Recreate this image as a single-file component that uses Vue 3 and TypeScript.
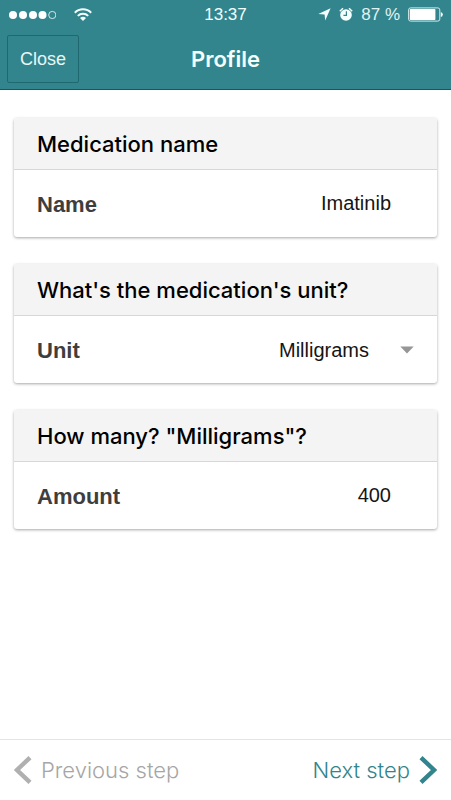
<script setup lang="ts">
import { computed, ref } from 'vue'

const name = ref('Imatinib')
const unit = ref('Milligrams')
const amount = ref('400')
const units: string[] = ['Milligrams']
const amountHeading = computed(() => `How many? "${unit.value}"?`)
</script>

<template>
  <div class="screen">
    <header class="top">
      <div class="status">
        <div class="side">
          <svg class="signal" width="48" height="10" viewBox="0 0 48 10" aria-hidden="true">
            <g fill="#fff">
              <circle cx="5" cy="5" r="4" />
              <circle cx="15" cy="5" r="4" />
              <circle cx="25" cy="5" r="4" />
              <circle cx="34.5" cy="5" r="4" />
            </g>
            <circle cx="44.3" cy="5" r="3.6" fill="none" stroke="#e4f1f1" stroke-width="0.9" />
          </svg>
          <svg width="18" height="13" viewBox="0 0 18 13" fill="none" stroke="#f4ffff" stroke-width="2" aria-hidden="true">
            <path d="M0.8 4.7a11.6 11.6 0 0 1 16.4 0" />
            <path d="M3.8 7.9a7.4 7.4 0 0 1 10.4 0" />
            <path d="M9 13L6 10.1a4.3 4.3 0 0 1 6 0z" fill="#f4ffff" stroke="none" />
          </svg>
        </div>
        <span class="time">13:37</span>
        <div class="side end">
          <svg width="13" height="13" viewBox="0 0 13 13" fill="#f4ffff" aria-hidden="true">
            <path d="M12.6 0.3L7.2 12.6L6.6 6.6L0.3 6.1z" />
          </svg>
          <svg class="alarm" width="14" height="15" viewBox="0 0 14 15" aria-hidden="true">
            <circle cx="7" cy="8" r="5.8" fill="#f4ffff" />
            <path d="M0.8 4.3L4 1.3M13.2 4.3L10 1.3" stroke="#f4ffff" stroke-width="1.5" />
            <path d="M7.4 4.3V8.4H4.4" fill="none" stroke="#32858c" stroke-width="1.2" />
          </svg>
          <span class="percent">87 %</span>
          <svg width="35" height="15" viewBox="0 0 35 15" aria-hidden="true">
            <rect x="0.6" y="0.9" width="31.2" height="13.2" rx="2" fill="none" stroke="#d5eaeb" stroke-width="1" />
            <rect x="1.8" y="2" width="25.6" height="11" rx="0.8" fill="#fff" />
            <path d="M32.8 5q2 0.5 2 2.5t-2 2.5z" fill="#f4ffff" />
          </svg>
        </div>
      </div>
      <div class="nav">
        <div class="nav-side"><button type="button" class="close">Close</button></div>
        <h1>Profile</h1>
        <div class="nav-side"></div>
      </div>
    </header>

    <main>
      <section class="card">
        <h2>Medication name</h2>
        <div class="row">
          <label for="name">Name</label>
          <input id="name" v-model="name" class="value" type="text" />
        </div>
      </section>
      <section class="card">
        <h2>What's the medication's unit?</h2>
        <div class="row with-caret">
          <label for="unit">Unit</label>
          <select id="unit" v-model="unit" class="value">
            <option v-for="u in units" :key="u" :value="u">{{ u }}</option>
          </select>
          <svg class="caret" width="14" height="8" viewBox="0 0 14 8" aria-hidden="true">
            <path d="M0.3 0.5H13.7L7 7.4z" fill="#969696" />
          </svg>
        </div>
      </section>
      <section class="card">
        <h2>{{ amountHeading }}</h2>
        <div class="row">
          <label for="amount">Amount</label>
          <input id="amount" v-model="amount" class="value" type="text" inputmode="decimal" />
        </div>
      </section>
    </main>

    <footer class="steps">
      <button type="button" class="step previous">
        <svg width="18" height="28" viewBox="0 0 18 28" aria-hidden="true">
          <path d="M16 1.6L3 14L16 26.4" fill="none" stroke="#b0b0b0" stroke-width="4.4" />
        </svg>
        <span>Previous step</span>
      </button>
      <button type="button" class="step next">
        <span>Next step</span>
        <svg width="18" height="28" viewBox="0 0 18 28" aria-hidden="true">
          <path d="M2 1.6L15 14L2 26.4" fill="none" stroke="currentColor" stroke-width="4.4" />
        </svg>
      </button>
    </footer>
  </div>
</template>

<style>
body {
  margin: 0;
  background: #fff;
}
</style>

<style scoped>
.screen {
  display: flex;
  flex-direction: column;
  min-height: 100vh;
  font-family: "Liberation Sans", Arial, sans-serif;
  color: #000;
}

.screen * {
  box-sizing: border-box;
}

button,
input,
select {
  margin: 0;
  border: 0;
  padding: 0;
  background: none;
  font-family: inherit;
  appearance: none;
}

.top {
  background: #32858c;
  border-bottom: 1px solid #145865;
  color: #f4ffff;
}

.status {
  display: flex;
  align-items: center;
  height: 29px;
  padding: 0 8px;
}

.side {
  display: flex;
  flex: 1;
  align-items: center;
  gap: 18px;
}

.side.end {
  justify-content: flex-end;
  gap: 8px;
}

.time,
.percent {
  font-size: 17px;
  line-height: 20px;
  white-space: nowrap;
}

.percent {
  color: #e2f3f4;
}

.nav {
  display: flex;
  align-items: center;
  height: 60px;
  padding: 0 7px;
}

.nav-side {
  flex: 1;
}

.close {
  display: block;
  height: 48px;
  padding: 1px 12px 0;
  border: 1px solid #206970;
  border-radius: 2px;
  color: #e8f7f8;
  font-size: 18px;
}

h1,
h2 {
  margin: 0;
  font-family: Inter, "Liberation Sans", sans-serif;
}

h1 {
  font-size: 22px;
  font-weight: 600;
  line-height: 28px;
}

main {
  display: flex;
  flex: 1;
  flex-direction: column;
  gap: 27px;
  padding: 28px 14px;
}

.card {
  border-radius: 3px;
  background: #fff;
  box-shadow: 0 1px 3px rgba(0, 0, 0, 0.35);
}

h2 {
  padding: 12px 23px 11px;
  border-bottom: 1px solid #d7d7d7;
  border-radius: 3px 3px 0 0;
  background: #f4f4f4;
  font-size: 22px;
  font-weight: 500;
  line-height: 28px;
}

.row {
  display: flex;
  align-items: center;
  height: 67px;
  padding: 0 46px 0 23px;
}

.row.with-caret {
  gap: 31px;
  padding-right: 23px;
}

label {
  color: #3e3e3e;
  font-size: 22px;
  font-weight: 700;
  line-height: 28px;
  padding-top: 2px;
}

.value {
  flex: 1;
  min-width: 0;
  height: 40px;
  color: #151515;
  font-size: 20px;
  text-align: right;
  text-align-last: right;
}

.caret {
  flex: none;
}

.steps {
  display: flex;
  align-items: center;
  justify-content: space-between;
  height: 61px;
  padding: 0 14px;
  border-top: 1px solid #e4e4e4;
}

.step {
  display: flex;
  align-items: center;
  gap: 9px;
  font-family: Inter, "Liberation Sans", sans-serif;
  font-size: 22px;
  font-weight: 300;
  line-height: 28px;
}

.previous {
  color: #a6a6a6;
}

.next {
  color: #32858c;
}
</style>
